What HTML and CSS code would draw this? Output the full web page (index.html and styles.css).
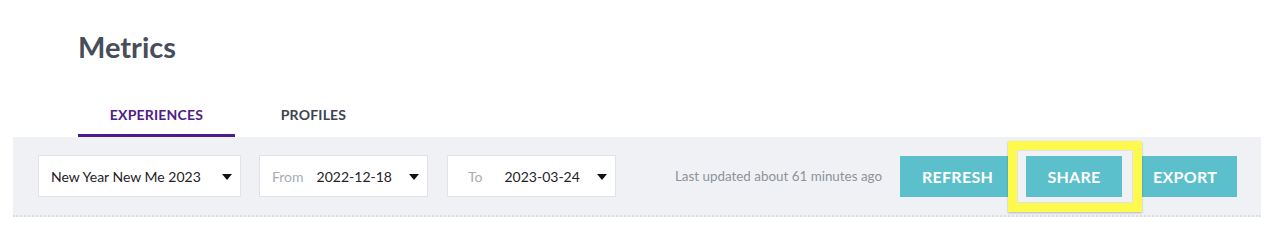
FILE: index.html
```html
<!DOCTYPE html>
<html lang="en">
<head>
<meta charset="utf-8">
<title>Metrics</title>
<link rel="stylesheet" href="styles.css">
</head>
<body>
<div class="page">
  <header class="header">
    <h1 class="title">Metrics</h1>
    <nav class="tabs">
      <div class="tab active">EXPERIENCES</div>
      <div class="tab">PROFILES</div>
    </nav>
  </header>
  <div class="toolbar">
    <div class="select sel-exp">
      <span class="value">New Year New Me 2023</span>
      <span class="caret"></span>
    </div>
    <div class="select sel-date sel-from">
      <span class="label">From</span>
      <span class="value">2022-12-18</span>
      <span class="caret"></span>
    </div>
    <div class="select sel-date sel-to">
      <span class="label">To</span>
      <span class="value">2023-03-24</span>
      <span class="caret"></span>
    </div>
    <div class="spacer"></div>
    <span class="updated">Last updated about 61 minutes ago</span>
    <div class="buttons">
      <button class="btn btn-refresh">REFRESH</button>
      <div class="share-wrap">
        <button class="btn btn-share">SHARE</button>
        <div class="highlight"></div>
      </div>
      <button class="btn btn-export">EXPORT</button>
    </div>
  </div>
</div>
</body>
</html>
```

FILE: styles.css
```css
* { box-sizing: border-box; }
html, body { margin: 0; padding: 0; background: #ffffff; }
body {
  font-family: "Lato", "Open Sans", sans-serif;
  width: 1274px;
  height: 234px;
  overflow: hidden;
}
.page { padding: 0 13px; }
.header { padding-left: 65px; }
.title {
  margin: 0;
  padding-top: 30px;
  font-family: "Lato", sans-serif;
  font-weight: 700;
  font-size: 29px;
  line-height: 34px;
  color: #474d59;
}
.tabs {
  display: flex;
  margin-top: 36px;
}
.tab {
  width: 157px;
  height: 37px;
  padding-top: 6px;
  text-align: center;
  font-family: "Lato", sans-serif;
  font-weight: 700;
  font-size: 14px;
  letter-spacing: 0.2px;
  color: #3e4450;
  border-bottom: 3px solid transparent;
}
.tab.active {
  color: #4e2088;
  border-bottom-color: #4b1c8a;
}
.toolbar {
  display: flex;
  align-items: center;
  height: 80px;
  padding: 19px 24px 19px 25px;
  background: #f0f1f5;
  border-bottom: 2px dotted #dcdee2;
}
.select {
  display: flex;
  align-items: center;
  height: 42px;
  background: #ffffff;
  border: 1px solid #e1e3e7;
  font-family: "Lato", sans-serif;
  font-size: 14px;
  color: #1f2227;
  position: relative;
}
.sel-exp { width: 203px; padding-left: 12px; }
.sel-from { width: 169px; padding-left: 12px; margin-left: 18px; }
.sel-to { width: 169px; padding-left: 20px; margin-left: 19px; }
.label { color: #a9acb2; }
.sel-from .label { margin-right: 13px; }
.sel-to .label { margin-right: 22px; }
.caret {
  position: absolute;
  right: 8px;
  top: 18px;
  width: 0;
  height: 0;
  border-left: 5.5px solid transparent;
  border-right: 5.5px solid transparent;
  border-top: 6px solid #111111;
}
.spacer { flex: 1; }
.updated {
  font-family: "Lato", sans-serif;
  font-size: 13.4px;
  color: #8d9199;
  margin-right: 18px;
}
.buttons {
  display: flex;
  align-items: center;
  gap: 11px;
}
.btn {
  height: 41px;
  border: 0;
  background: #5bbfcc;
  color: #ffffff;
  font-family: "Lato", sans-serif;
  font-weight: 700;
  font-size: 16px;
  letter-spacing: 0.3px;
  padding: 0;
  cursor: pointer;
}
.btn-refresh { width: 115px; }
.btn-share { width: 96px; }
.btn-export { width: 104px; }
.share-wrap { position: relative; display: flex; }
.highlight {
  position: absolute;
  left: -18px;
  top: -15px;
  width: 134px;
  height: 71px;
  border: 9px solid #fdfa4d;
  box-shadow: 0 1px 2px rgba(0,0,0,0.25), inset 0 0 0 1px rgba(0,0,0,0.06);
  pointer-events: none;
}
```
